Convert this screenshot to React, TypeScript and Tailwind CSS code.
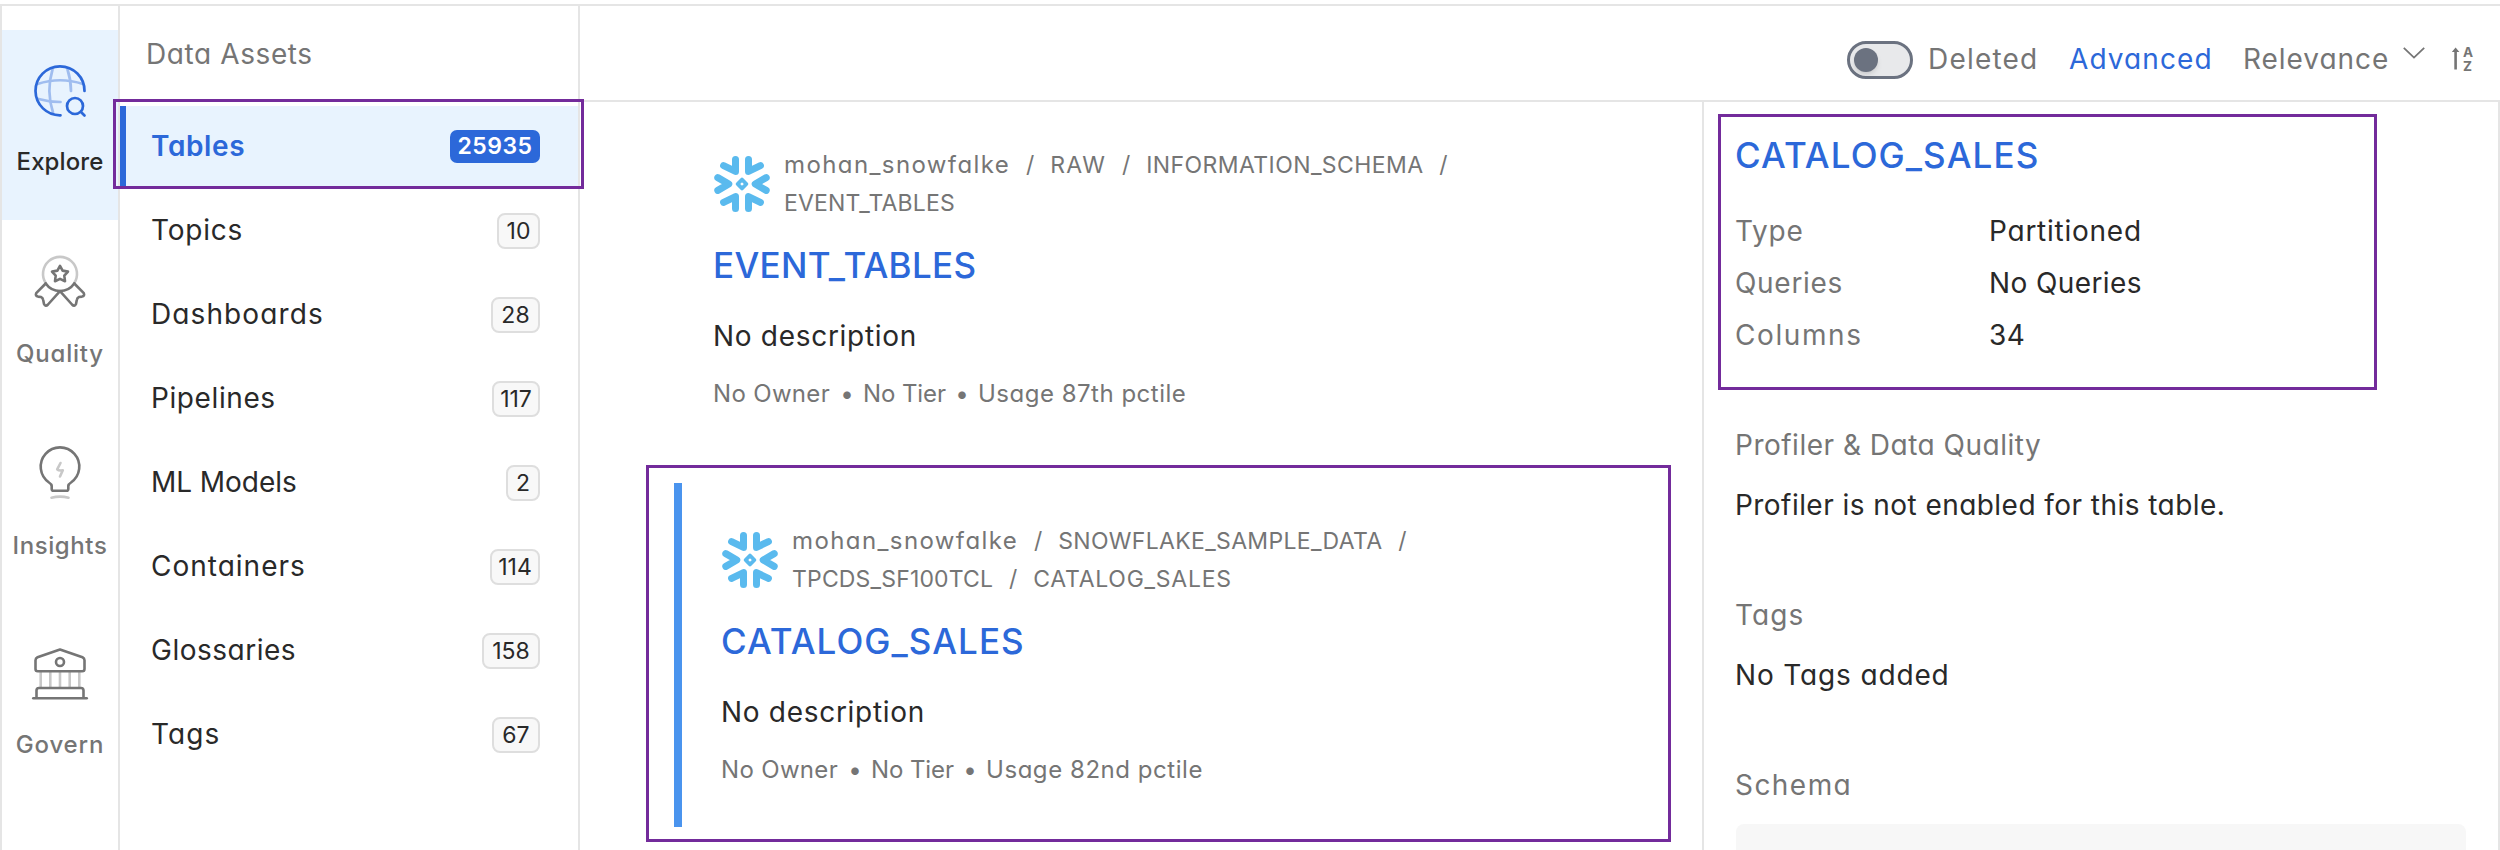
import type { ReactNode } from "react";

const crumbText = "text-[23px] leading-[38px]";

function ExploreIcon() {
  return (
    <svg width="60" height="60" viewBox="0 0 60 60" fill="none" stroke="#2c68d9" strokeWidth="2.7" strokeLinecap="round">
      <g opacity="0.38">
        <path d="M7.5 23Q30 15.5 53 23" />
        <path d="M8.5 38Q19 41 30.5 41" />
        <path d="M22.5 8.5Q16 30 23 51.5" />
        <path d="M37.5 8.5Q41 19 41 30" />
      </g>
      <path d="M54.5 30A24.5 24.5 0 1 0 30.5 54.3" />
      <circle cx="45" cy="45" r="8" />
      <path d="M51 51L54.5 54.5" />
    </svg>
  );
}

function QualityIcon() {
  return (
    <svg width="60" height="60" viewBox="0 0 60 60" fill="none" stroke="#757575" strokeWidth="2.6" strokeLinecap="round" strokeLinejoin="round">
      <path d="M16 32.5A17 17 0 1 1 44 32.5" stroke="#c8c8c8" />
      <path d="M30 14.8L32.6 19.6L38 20.6L34.3 24.7L35 30.2L30 27.9L25 30.2L25.7 24.7L22 20.6L27.4 19.6Z" />
      <path d="M15.7 32.5Q21 40 30 40Q39 40 44.3 32.5" />
      <path d="M15.7 32.5L6.2 42.2Q5 45 8 45.6L11 46Q12.8 46.6 13.2 49L14 53Q15.5 56 18 53.5L30 40.2" />
      <path d="M44.3 32.5L53.8 42.2Q55 45 52 45.6L49 46Q47.2 46.6 46.8 49L46 53Q44.5 56 42 53.5L30 40.2" />
    </svg>
  );
}

function InsightsIcon() {
  return (
    <svg width="60" height="60" viewBox="0 0 60 60" fill="none" stroke="#757575" strokeWidth="2.6" strokeLinecap="round" strokeLinejoin="round">
      <path d="M21.7 43Q21.5 41 19 39.5A19.3 19.3 0 1 1 41 39.5Q38.5 41 38.3 43V46Q38.3 47.8 36.5 47.8H23.5Q21.7 47.8 21.7 46Z" />
      <g stroke="#c8c8c8">
        <path d="M30.5 20L27.2 26.3Q28.5 27.8 32.8 27.3L30 33.5" />
        <path d="M21.5 54.7Q30 52.5 38.5 54.7" />
      </g>
    </svg>
  );
}

function GovernIcon() {
  return (
    <svg width="60" height="60" viewBox="0 0 60 60" fill="none" stroke="#757575" strokeWidth="2.6" strokeLinecap="round" strokeLinejoin="round">
      <path d="M10.7 29V44M20.3 29V44M30 29V44M39.7 29V44M49.3 29V44" stroke="#c8c8c8" />
      <path d="M30 6.5L52.5 14.3Q54.5 15.2 54.5 17.2V26Q54.5 28.3 52.2 28.3H7.8Q5.5 28.3 5.5 26V17.2Q5.5 15.2 7.5 14.3Z" />
      <circle cx="30" cy="19" r="4" />
      <path d="M6.5 54.5V47.5Q6.5 45 9 45H51Q53.5 45 53.5 47.5V54.5" />
      <path d="M3.3 55.2H56.7" />
    </svg>
  );
}

function SnowflakeIcon() {
  return (
    <svg className="mt-[10px] ml-[1px] shrink-0" width="56" height="56" viewBox="0 0 56 56" fill="none" stroke="#5abaee" strokeWidth="7" strokeLinecap="round" strokeLinejoin="round">
      <path d="M21.5 3.6V15.4L9.6 9.6" />
      <path d="M34.5 3.6V15.4L46.4 9.6" />
      <path d="M21.5 52.4V40.6L9.6 46.4" />
      <path d="M34.5 52.4V40.6L46.4 46.4" />
      <path d="M3.8 21.6L14.8 28L3.8 34.4" />
      <path d="M52.2 21.6L41.2 28L52.2 34.4" />
      <path d="M28 23.6L32.4 28L28 32.4L23.6 28Z" strokeWidth="3.8" />
    </svg>
  );
}

const nav = [
  { label: "Explore", icon: <ExploreIcon />, box: "h-[190px] bg-[#e8f3fe] text-[#292929]", gap: "mt-[25px] tracking-[0.1px]" },
  { label: "Quality", icon: <QualityIcon />, box: "h-[192px] text-[#757575]", gap: "mt-[27px] tracking-[0.8px]" },
  { label: "Insights", icon: <InsightsIcon />, box: "h-[200px] text-[#757575]", gap: "mt-[27px] tracking-[0.6px]" },
  { label: "Govern", icon: <GovernIcon />, box: "h-[200px] text-[#757575]", gap: "mt-[26px] tracking-[0.85px]" },
];

const assets = [
  { label: "Topics", track: "tracking-[0.8px]", count: "10", width: "w-[43px]" },
  { label: "Dashboards", track: "tracking-[1.1px]", count: "28", width: "w-[49px]" },
  { label: "Pipelines", track: "tracking-[0.6px]", count: "117", width: "w-[48px]" },
  { label: "ML Models", track: "tracking-[-0.05px]", count: "2", width: "w-[34px]" },
  { label: "Containers", track: "tracking-[1px]", count: "114", width: "w-[50px]" },
  { label: "Glossaries", track: "tracking-[0.5px]", count: "158", width: "w-[58px]" },
  { label: "Tags", track: "tracking-[1.1px]", count: "67", width: "w-[48px]" },
];

function Slash() {
  return <span className="inline-block w-[40px] text-center">/</span>;
}

function Meta({ usage, track }: { usage: string; track: string }) {
  return (
    <div className="mt-[20px] flex text-[24px] leading-[36px] text-[#757575]">
      <span className="w-[118px] tracking-[0.33px]">No Owner</span>
      <span className="w-[32px] text-center">•</span>
      <span className="w-[83px] tracking-[-0.1px]">No Tier</span>
      <span className="w-[32px] text-center">•</span>
      <span className={track}>{usage}</span>
    </div>
  );
}

function Result({ crumbs, title, titleTrack, usage, usageTrack }: { crumbs: ReactNode; title: string; titleTrack: string; usage: string; usageTrack: string }) {
  return (
    <div>
      <div className="flex gap-[14px]">
        <SnowflakeIcon />
        <div className={`${crumbText} whitespace-nowrap text-[#757575]`}>{crumbs}</div>
      </div>
      <h2 className={`mt-[18px] text-[35px] leading-[50px] font-medium text-[#2c68d9] ${titleTrack}`}>{title}</h2>
      <p className="mt-[26px] text-[28px] leading-[40px] tracking-[0.7px] text-[#292929]">No description</p>
      <Meta usage={usage} track={usageTrack} />
    </div>
  );
}

function Toolbar() {
  return (
    <div className="flex h-[96px] shrink-0 items-center border-b-2 border-[#e5e5e5] pt-[12px] pl-[1267px] text-[28px] leading-[40px] text-[#757575]">
      <div className="mt-[2px] flex h-[38px] w-[66px] shrink-0 items-center rounded-full border-[3px] border-[#6b7280] bg-[#e8e9eb] pl-[4px]">
        <div className="size-[24px] rounded-full bg-[#6b7280] shadow-md" />
      </div>
      <span className="ml-[15px] w-[141px] shrink-0 tracking-[1.2px]">Deleted</span>
      <span className="w-[174px] shrink-0 tracking-[1.1px] text-[#2c68d9]">Advanced</span>
      <span className="w-[160px] shrink-0 tracking-[0.95px]">Relevance</span>
      <svg className="mb-[13px] shrink-0" width="22" height="12" viewBox="0 0 22 12" fill="none" stroke="#757575" strokeWidth="1.8">
        <path d="M0.8 0.8L11 10.6L21.2 0.8" />
      </svg>
      <svg className="ml-[27px] shrink-0" width="9" height="24" viewBox="0 0 9 24" fill="#757575">
        <path d="M3.6 0.5L7.4 5H4.9V22.5H2.3V5H-0.2Z" />
      </svg>
      <div className="ml-[2px] flex shrink-0 flex-col text-[13.5px] leading-[14px] font-bold">
        <span>A</span>
        <span>Z</span>
      </div>
    </div>
  );
}

function Fact({ label, track, children, valueTrack }: { label: string; track: string; children: string; valueTrack: string }) {
  return (
    <div className="flex text-[28px] leading-[52px]">
      <span className={`w-[254px] text-[#757575] ${track}`}>{label}</span>
      <span className={`text-[#292929] ${valueTrack}`}>{children}</span>
    </div>
  );
}

export default function App() {
  return (
    <div className="relative h-[850px] w-[2500px] overflow-hidden bg-white pt-[4px] font-['Inter',sans-serif] whitespace-nowrap [font-feature-settings:'cv11']">
      <div className="flex h-[846px] border-t-2 border-l-2 border-[#e5e5e5]">
        <nav className="w-[118px] shrink-0 border-r-2 border-[#e5e5e5] pt-[24px]">
          {nav.map((item) => (
            <div key={item.label} className={`flex flex-col items-center pt-[31px] ${item.box}`}>
              {item.icon}
              <span className={`text-[24px] leading-[32px] font-medium ${item.gap}`}>{item.label}</span>
            </div>
          ))}
        </nav>

        <aside className="w-[460px] shrink-0 border-r-2 border-[#e5e5e5]">
          <div className="flex h-[100px] items-center pb-[5px] pl-[26px] text-[28px] tracking-[0.6px] text-[#757575]">Data Assets</div>
          <div className="flex h-[80px] items-center justify-between border-l-[6px] border-[#2c68d9] bg-[#e8f3fe] pr-[38px] pl-[25px]">
            <span className="text-[28px] font-semibold tracking-[0.6px] text-[#2c68d9]">Tables</span>
            <span className="flex h-[33px] w-[90px] items-center justify-center rounded-[7px] bg-[#2c68d9] text-[23px] font-semibold tracking-[0.46px] text-white">25935</span>
          </div>
          {assets.map((asset) => (
            <div key={asset.label} className="mt-[4px] flex h-[80px] items-center justify-between border-l-[6px] border-transparent pr-[38px] pl-[25px] text-[#292929]">
              <span className={`text-[28px] ${asset.track}`}>{asset.label}</span>
              <span className={`mt-[2px] flex h-[36px] items-center justify-center rounded-[8px] border-2 border-[#dedede] bg-[#f8f8f8] text-[23px] ${asset.width}`}>{asset.count}</span>
            </div>
          ))}
        </aside>

        <div className="flex grow flex-col">
          <Toolbar />
          <div className="flex grow">
            <main className="w-[1122px] shrink-0">
              <div className="pt-[44px] pl-[133px]">
                <Result
                  title="EVENT_TABLES"
                  titleTrack="tracking-[0.3px]"
                  usage="Usage 87th pctile"
                  usageTrack="tracking-[0.5px]"
                  crumbs={
                    <>
                      <div>
                        <span className="text-[24px] tracking-[1.4px]">mohan_snowfalke</span>
                        <Slash />
                        <span className="tracking-[1.32px]">RAW</span>
                        <Slash />
                        <span className="tracking-[0.42px]">INFORMATION_SCHEMA</span>
                        <Slash />
                      </div>
                      <div className="tracking-[0.16px]">EVENT_TABLES</div>
                    </>
                  }
                />
              </div>
              <div className="mt-[53px] ml-[66px] h-[377px] w-[1025px] border-[3px] border-[#732b9b] pt-[15px] pl-[25px]">
                <div className="h-[344px] border-l-[8px] border-[#4a94ee] pt-[39px] pl-[39px]">
                  <Result
                    title="CATALOG_SALES"
                    titleTrack="tracking-[1.05px]"
                    usage="Usage 82nd pctile"
                    usageTrack="tracking-[0.55px]"
                    crumbs={
                      <>
                        <div>
                          <span className="text-[24px] tracking-[1.4px]">mohan_snowfalke</span>
                          <Slash />
                          <span className="tracking-[0.33px]">SNOWFLAKE_SAMPLE_DATA</span>
                          <Slash />
                        </div>
                        <div>
                          <span className="tracking-[0.17px]">TPCDS_SF100TCL</span>
                          <Slash />
                          <span className="tracking-[0.74px]">CATALOG_SALES</span>
                        </div>
                      </>
                    }
                  />
                </div>
              </div>
            </main>

            <section className="grow border-x-2 border-[#e5e5e5] pt-[12px] text-[28px] leading-[40px]">
              <div className="ml-[14px] h-[276px] w-[659px] border-[3px] border-[#732b9b] pt-[13px] pl-[14px]">
                <h2 className="mb-[25px] text-[35px] leading-[50px] font-medium tracking-[1.1px] text-[#2c68d9]">CATALOG_SALES</h2>
                <Fact label="Type" track="tracking-[0.75px]" valueTrack="tracking-[0.75px]">Partitioned</Fact>
                <Fact label="Queries" track="tracking-[0.7px]" valueTrack="tracking-[0.4px]">No Queries</Fact>
                <Fact label="Columns" track="tracking-[1.6px]" valueTrack="tracking-[0.5px]">34</Fact>
              </div>
              <div className="pl-[31px]">
                <h3 className="mt-[35px] tracking-[0.5px] text-[#757575]">Profiler &amp; Data Quality</h3>
                <p className="mt-[20px] tracking-[0.45px] text-[#292929]">Profiler is not enabled for this table.</p>
                <h3 className="mt-[70px] tracking-[1.1px] text-[#757575]">Tags</h3>
                <p className="mt-[20px] tracking-[0.85px] text-[#292929]">No Tags added</p>
                <h3 className="mt-[70px] tracking-[1.45px] text-[#757575]">Schema</h3>
                <div className="mt-[19px] ml-[1px] h-[40px] w-[730px] rounded-t-[8px] bg-[#f7f7f7]" />
              </div>
            </section>
          </div>
        </div>
      </div>
      <div className="absolute top-[99px] left-[113px] h-[90px] w-[471px] border-[3px] border-[#732b9b]" />
    </div>
  );
}
